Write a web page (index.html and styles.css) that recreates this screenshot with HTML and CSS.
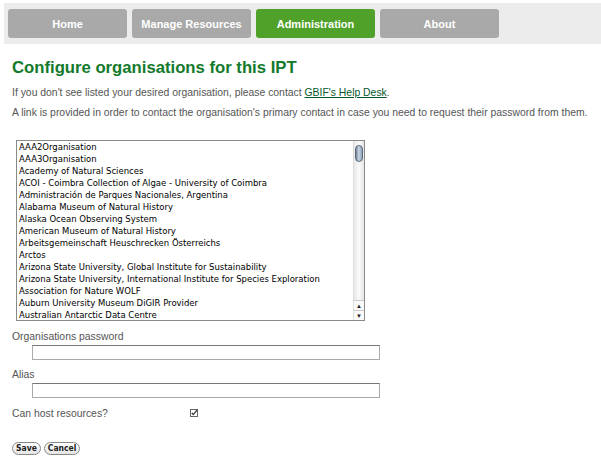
FILE: index.html
```html
<!DOCTYPE html>
<html>
<head>
<meta charset="utf-8">
<link rel="stylesheet" href="styles.css">
</head>
<body>
<nav class="menu">
  <a class="tab">Home</a>
  <a class="tab">Manage Resources</a>
  <a class="tab current">Administration</a>
  <a class="tab">About</a>
</nav>
<main class="content">
  <h1 class="title">Configure organisations for this IPT</h1>
  <p class="note first">If you don't see listed your desired organisation, please contact <a class="link" href="#">GBIF's Help Desk</a>.</p>
  <p class="note second">A link is provided in order to contact the organisation's primary contact in case you need to request their password from them.</p>
  <div class="listbox">
    <ul class="options">
      <li>AAA2Organisation</li>
      <li>AAA3Organisation</li>
      <li>Academy of Natural Sciences</li>
      <li>ACOI - Coimbra Collection of Algae - University of Coimbra</li>
      <li>Administración de Parques Nacionales, Argentina</li>
      <li>Alabama Museum of Natural History</li>
      <li>Alaska Ocean Observing System</li>
      <li>American Museum of Natural History</li>
      <li>Arbeitsgemeinschaft Heuschrecken Österreichs</li>
      <li>Arctos</li>
      <li>Arizona State University, Global Institute for Sustainability</li>
      <li>Arizona State University, International Institute for Species Exploration</li>
      <li>Association for Nature WOLF</li>
      <li>Auburn University Museum DiGIR Provider</li>
      <li>Australian Antarctic Data Centre</li>
    </ul>
    <div class="scrollbar">
      <div class="track"><div class="thumb"></div></div>
      <div class="arrow">▲</div>
      <div class="arrow">▼</div>
    </div>
  </div>
  <div class="field pw">
    <label class="label">Organisations password</label>
    <div class="input"></div>
  </div>
  <div class="field alias">
    <label class="label">Alias</label>
    <div class="input"></div>
  </div>
  <div class="check-row">
    <span class="label">Can host resources?</span>
    <span class="checkbox">
      <svg width="8" height="8" viewBox="0 0 8 8"><rect x="0.5" y="0.5" width="7" height="7" fill="#fff" stroke="#666"/><path d="M1.8 3.8 L3.3 5.6 L7.2 0.8" fill="none" stroke="#333" stroke-width="1.3"/></svg>
    </span>
  </div>
  <div class="buttons">
    <button class="btn">Save</button>
    <button class="btn">Cancel</button>
  </div>
</main>
</body>
</html>
```

FILE: styles.css
```css
* { box-sizing: border-box; }
html, body { margin: 0; padding: 0; background: #fff; }
body {
  font-family: "Liberation Sans", Arial, sans-serif;
  font-size: 10.4px;
  color: #555;
}
.menu {
  margin: 3px 0 0 4px;
  height: 41px;
  background: #ececec;
  display: flex;
  gap: 5px;
  padding: 6px 0 0 4px;
}
.tab {
  width: 119px;
  height: 29px;
  background: #a9a9a9;
  border-radius: 3px;
  color: #fff;
  font-weight: bold;
  font-size: 11px;
  display: flex;
  align-items: center;
  justify-content: center;
  text-decoration: none;
}
.tab.current { background: #4fa12a; }
.content { padding: 0 0 0 12px; }
.title {
  margin: 14px 0 0 0;
  font-size: 16.7px;
  line-height: 20px;
  color: #137a2b;
  font-weight: bold;
}
.note {
  margin: 0;
  line-height: 14px;
  white-space: nowrap;
}
.note.first { margin-top: 8px; }
.note.second { margin-top: 6px; }
.link { color: #04582a; text-decoration: underline; }
.listbox {
  margin: 20px 0 0 4px;
  width: 349px;
  height: 181px;
  border: 1px solid #8a8a8a;
  display: flex;
}
.options {
  list-style: none;
  margin: 0;
  padding: 0 0 0 2px;
  flex: 1;
  font-family: "DejaVu Sans Condensed", "DejaVu Sans", sans-serif;
  font-size: 9.45px;
  color: #000;
  line-height: 12px;
  overflow: hidden;
}
.options li { height: 12px; white-space: nowrap; }
.scrollbar {
  width: 11px;
  display: flex;
  flex-direction: column;
  background: #f2f2f2;
  border-left: 1px solid #ddd;
}
.track {
  flex: 1;
  background: linear-gradient(to right, #e8e8e8, #fafafa 50%, #e6e6e6);
  padding: 4px 1px 0 1px;
}
.thumb {
  height: 17px;
  border-radius: 5px;
  background: linear-gradient(to right, #6e7f92, #c9d6e4 45%, #8ea1b6);
  border: 1px solid #5b6b7c;
}
.arrow {
  height: 10px;
  font-size: 6px;
  line-height: 10px;
  text-align: center;
  color: #222;
  background: #fafafa;
  border-top: 1px solid #ccc;
}
.field .label { display: block; line-height: 14px; }
.field.pw { margin-top: 9px; }
.field.alias { margin-top: 8px; }
.input {
  margin: 1px 0 0 20px;
  width: 348px;
  height: 15px;
  border: 1px solid #aaa;
  border-top-color: #777;
  background: #fff;
}
.check-row {
  margin-top: 8px;
  display: flex;
  align-items: center;
  height: 14px;
}
.check-row .label { width: 178px; }
.checkbox { display: flex; }
.buttons {
  margin-top: 22px;
  display: flex;
  gap: 3px;
  padding-left: 0;
}
.btn {
  font-family: "DejaVu Sans Condensed", "DejaVu Sans", sans-serif;
  font-size: 8.5px;
  font-weight: bold;
  color: #222;
  height: 13px;
  padding: 0 3px;
  border: 1px solid #888;
  border-radius: 7px;
  background: linear-gradient(#fff, #e4e4e4);
  line-height: 11px;
}
```
